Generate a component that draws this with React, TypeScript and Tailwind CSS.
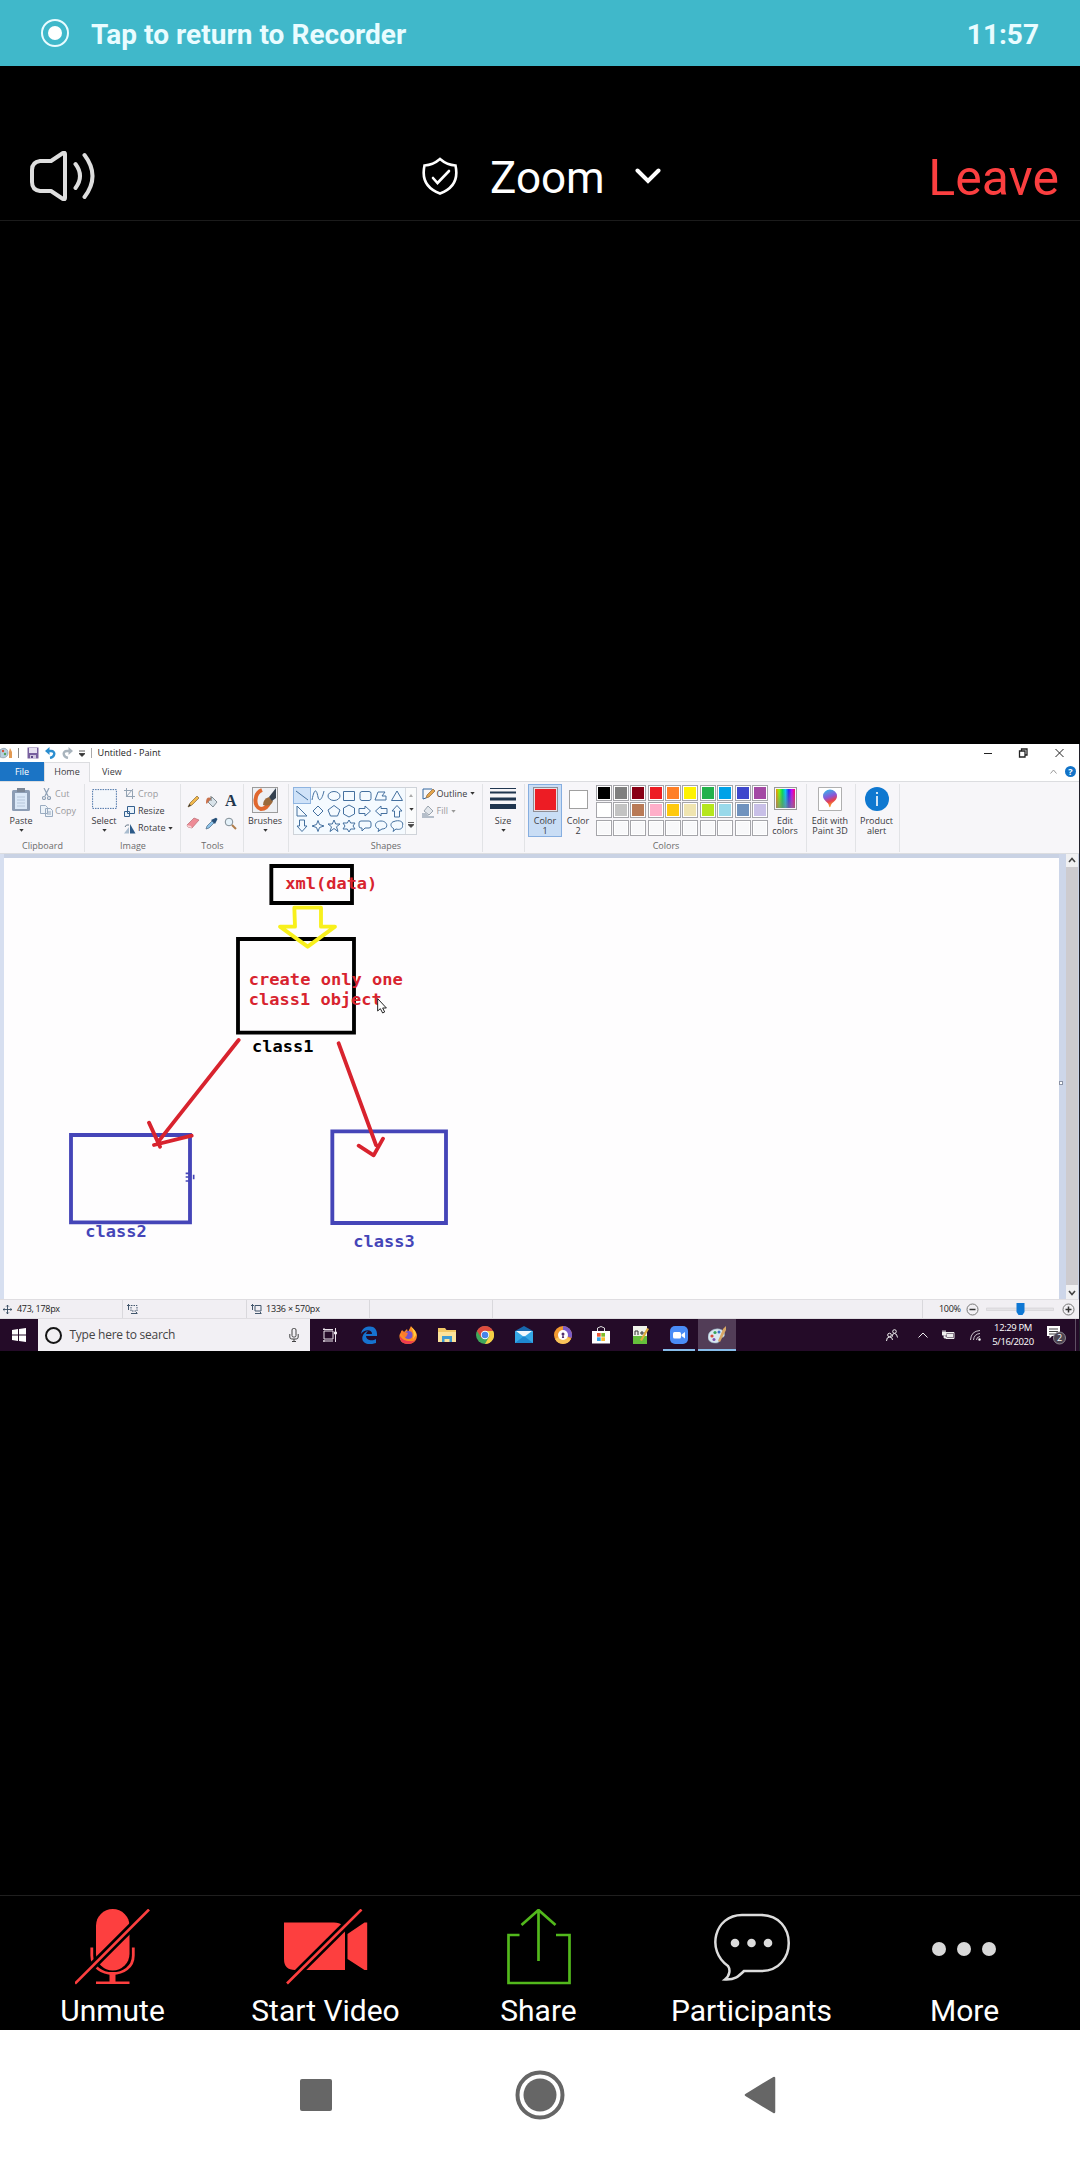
import React from "react";

type Kids = { children?: React.ReactNode };

const Caret = ({ c = "#333" }: { c?: string }) => (
  <svg width="5" height="3" viewBox="0 0 5 3" className="shrink-0"><path d="M.3 0h4.4L2.5 2.8z" fill={c} /></svg>
);

function Group({ w, label, children }: Kids & { w: string; label?: string }) {
  return (
    <div className={`${w} relative flex h-full shrink-0 flex-col`}>
      <div className="flex h-[58px] w-full">{children}</div>
      <div className="h-[12px] text-center leading-[12px] text-[#6b6b6b]">{label}</div>
      <div className="absolute right-0 top-[2px] h-[68px] w-px bg-[#e2e3e6]" />
    </div>
  );
}

function BigButton({ w, icon, lines, caret }: { w: string; icon: React.ReactNode; lines: string[]; caret?: boolean }) {
  return (
    <div className={`${w} flex shrink-0 flex-col items-center pt-[5px]`}>
      <div className="flex h-[27px] items-start justify-center">{icon}</div>
      {lines.map((l) => (
        <div key={l} className="h-[10.3px] whitespace-nowrap leading-[13px]">{l}</div>
      ))}
      {caret && <div className="flex h-[10px] items-center pt-[2px]"><Caret /></div>}
    </div>
  );
}

function Row({ icon, text, dim, caret }: { icon: React.ReactNode; text: string; dim?: boolean; caret?: boolean }) {
  return (
    <div className={`flex h-[17.4px] items-center ${dim ? "text-[#9a9a9e]" : ""}`}>
      <div className="mr-[2px] flex w-[13px] justify-center">{icon}</div>
      <span className="whitespace-nowrap">{text}</span>
      {caret && <span className="ml-[3px]"><Caret c={dim ? "#999" : "#333"} /></span>}
    </div>
  );
}

function TitleBar() {
  return (
    <div className="flex h-[18px] items-center bg-white">
      <svg width="13" height="12" viewBox="0 0 13 12" className="shrink-0">
        <path d="M0 3C3 0 8 1 8 6c0 4-4 6-8 4z" fill="#b7cfdf" stroke="#7b8a96" strokeWidth=".6" />
        <circle cx="3" cy="4" r="1.2" fill="#d8533d" /><circle cx="5" cy="7" r="1.2" fill="#4fa35a" />
        <path d="M9 11V5l1-4 2 4v6z" fill="#e29a52" />
      </svg>
      <div className="ml-[5px] h-[10px] w-px bg-[#888]" />
      <svg className="ml-[7.500px]" width="12" height="12" viewBox="0 0 12 12">
        <path d="M.5.5h11v11H.5z" fill="#78609f" /><path d="M2 1h8v5H2z" fill="#e6e0f0" /><path d="M3 8h6v4H3z" fill="#cfc5df" /><path d="M4 9h2v2H4z" fill="#5c4787" />
      </svg>
      <svg className="ml-[6px]" width="11" height="12" viewBox="0 0 11 12">
        <path d="M2 4h4c5 0 4 6-1 7" fill="none" stroke="#2b8ed0" strokeWidth="2.4" /><path d="M0 4l4.500-4v8z" fill="#2b8ed0" />
      </svg>
      <svg className="ml-[6px]" width="11" height="12" viewBox="0 0 11 12">
        <path d="M9 4H5C0 4 1 10 6 11" fill="none" stroke="#a9b4bd" strokeWidth="2.4" /><path d="M11 4L6.500 0v8z" fill="#a9b4bd" />
      </svg>
      <svg className="ml-[6px]" width="6" height="8" viewBox="0 0 6 8"><path d="M0 2h6M0 4.500h6L3 7.500z" stroke="#333" strokeWidth=".8" fill="#333" /></svg>
      <div className="ml-[6px] h-[10px] w-px bg-[#aaa]" />
      <span className="ml-[6px] whitespace-nowrap text-[9.1px] text-[#222]">Untitled - Paint</span>
      <div className="grow" />
      <svg width="80" height="12" viewBox="0 0 80 12" className="mr-[15.500px]" fill="none" stroke="#222" strokeWidth="1">
        <path d="M0 6.500h8" /><path d="M35.500 4h5.500v6h-5.500zM37.500 4V2h5.500v6h-2" strokeWidth="1.300" /><path d="M71.500 2l8 8m0-8l-8 8" />
      </svg>
    </div>
  );
}

function Tabs() {
  return (
    <div className="flex h-[19px] items-center bg-white">
      <div className="flex h-full w-[44px] items-center justify-center bg-[#1b74c5] text-white">File</div>
      <div className="relative z-10 mb-[-1px] flex h-[20px] w-[46px] items-center justify-center border-x border-t border-[#dcdde0] bg-[#f7f6f9] pb-px">Home</div>
      <div className="ml-[12px]">View</div>
      <div className="grow" />
      <svg width="7" height="5" viewBox="0 0 7 5"><path d="M.5 4.500l3-3.500 3 3.500" fill="none" stroke="#999" /></svg>
      <div className="ml-[8.500px] mr-[3px] flex size-[11px] items-center justify-center rounded-full bg-[#1273c8] text-[9px] font-bold text-white">?</div>
    </div>
  );
}

const SHAPES = [
  "M1 2l12 9", "M1 11C4 -4 6 3 7 8s4 3 6-6", "M1 7a6 4.500 0 1012 0a6 4.500 0 10-12 0z", "M1.500 2.500h11v9h-11z",
  "M4 2.500h7q2 0 2 2v5q0 2-2 2H4q-2 0-2-2v-5q0-2 2-2z", "M1 11l3-8h7l-3 4h4v4z", "M7 2l5.500 9.500h-11z",
  "M2 2v10h10z", "M7 2l5 5-5 5-5-5z", "M7 1.500l6 4.500-2.500 6h-7L1 6z", "M7 1l5.500 3v6L7 13l-5.500-3V4z",
  "M1 4.500h6V2l5.500 5L7 12V9.500H1z", "M13 4.500H7V2L1.500 7 7 12V9.500h6z", "M4.500 13V7H2l5-5.500L12 7H9.500v6z",
  "M4.500 1v6H2l5 5.500L12 7H9.500V1z", "M7 1.500l1.500 4 4.500 1.500-4.500 1.500-1.500 4-1.500-4L1 7l4.500-1.500z",
  "M7 1l1.700 4H13l-3.500 2.800L11 12.500 7 9.500l-4 3 1.500-4.700L1 5h4.300z",
  "M7 1l1.700 3H13l-2 3 2 3H8.700L7 13l-1.700-3H1l2-3-2-3h4.300z",
  "M3 2h8q2 0 2 2v3q0 2-2 2H7l-3 3V9H3Q1 9 1 7V4q0-2 2-2z", "M5 10C0 9 0 2 7 2s8 8 1 8l-4 2.500z", "M4 10C-1 7 1 3 4 2.500c5-2 10 0 8.500 4C13 10 9 11 6 10l-3 2.500z",
];

const PALETTE = [
  ["#000000", "#7f7f7f", "#880015", "#ed1c24", "#ff7f27", "#fff200", "#22b14c", "#00a2e8", "#3f48cc", "#a349a4"],
  ["#ffffff", "#c3c3c3", "#b97a57", "#ffaec9", "#ffc90e", "#efe4b0", "#b5e61d", "#99d9ea", "#7092be", "#c8bfe7"],
  ["#f8f8fa", "#f8f8fa", "#f8f8fa", "#f8f8fa", "#f8f8fa", "#f8f8fa", "#f8f8fa", "#f8f8fa", "#f8f8fa", "#f8f8fa"],
];

const TOOLS = [
  <svg key="p" width="13" height="13" viewBox="0 0 13 13"><path d="M1 12l2-4 7-7 2 2-7 7z" fill="#f1b84c" stroke="#8a6a3a" strokeWidth=".7" /><path d="M1 12l1.500-3 1.500 1.500z" fill="#333" /></svg>,
  <svg key="b" width="14" height="13" viewBox="0 0 14 13"><path d="M7 2l5 5-4 5-5-5z" fill="#d9e3ea" stroke="#66757f" strokeWidth=".8" /><path d="M6 3Q1 1 1 8q1 2 2-1l3-3z" fill="#c9704a" /><path d="M6 1v5" stroke="#777" /></svg>,
  <span key="a" className="font-['Liberation_Serif'] text-[16px] font-bold leading-none text-[#23364d]">A</span>,
  <svg key="e" width="14" height="12" viewBox="0 0 14 12"><path d="M1 8l7-7 5 2-7 8-4-1z" fill="#ee8b96" stroke="#b86b73" strokeWidth=".7" /><path d="M1 8l4 1 1 2-4-1z" fill="#f9d4d6" /></svg>,
  <svg key="d" width="13" height="13" viewBox="0 0 13 13"><path d="M1 12l1-3 5-5 2 2-5 5z" fill="#8ec3ea" stroke="#4b6983" strokeWidth=".7" /><path d="M6 3l4 4 2.500-5L11 .7z" fill="#264f78" /></svg>,
  <svg key="z" width="13" height="13" viewBox="0 0 13 13"><circle cx="5" cy="5" r="3.800" fill="#e5f2fa" stroke="#7f8b94" /><path d="M8 8l4 4" stroke="#b07d4a" strokeWidth="2" /></svg>,
];

function Ribbon() {
  return (
    <div className="flex h-[73px] border-b border-t border-[#dcdde0] bg-[#f7f6f9]">
      <Group w="w-[85px]" label="Clipboard">
        <BigButton w="w-[42px]" lines={["Paste"]} caret icon={
          <svg width="20" height="25" viewBox="0 0 20 25"><rect x="1" y="3" width="18" height="21" rx="1.500" fill="#8d9db5" /><path d="M4 6h12v16H4z" fill="#dbe8f8" /><path d="M6 1h8v4H6z" fill="#7c8797" /><path d="M6 10h8M6 13h8M6 16h8M6 19h8" stroke="#b6c6db" /></svg>} />
        <div className="-ml-[2px] pt-[3px]">
          <Row dim text="Cut" icon={<svg width="9" height="12" viewBox="0 0 9 12" fill="none" stroke="#8fa0b5" strokeWidth="1.200"><path d="M2 0l4 8M7 0L3 8" /><circle cx="2" cy="10" r="1.500" /><circle cx="7" cy="10" r="1.500" /></svg>} />
          <Row dim text="Copy" icon={<svg width="13" height="12" viewBox="0 0 13 12" fill="#eef3f9" stroke="#9aabc0"><path d="M.5.5h5l2 2v6h-7zM5.500 3.500h5l2 2v6h-7z" /><path d="M7 7h4M7 9h4" /></svg>} />
        </div>
      </Group>
      <Group w="w-[96px]" label="Image">
        <BigButton w="w-[38px]" lines={["Select"]} caret icon={
          <svg width="25" height="22" viewBox="0 0 25 22"><rect x=".6" y="2.600" width="23.800" height="18.800" fill="#f4f7fb" stroke="#4a74a8" strokeDasharray="1.500 1" /></svg>} />
        <div className="pt-[3px]">
          <Row dim text="Crop" icon={<svg width="11" height="11" viewBox="0 0 11 11" fill="none" stroke="#94a3b3"><path d="M2.500 0v8.500H11M0 2.500h8.500V11M2 9l7-8" /></svg>} />
          <Row text="Resize" icon={<svg width="11" height="11" viewBox="0 0 11 11" fill="#eaf2fa" stroke="#35608f"><path d="M3.500.5h7v7h-7zM.5 5.500h5v5h-5z" /></svg>} />
          <Row text="Rotate" caret icon={<svg width="12" height="11" viewBox="0 0 12 11"><path d="M0 10.500h5V4z" fill="#a9bccf" /><path d="M6 1v9.500h5.500z" fill="#2c5a88" /><path d="M1 4q1-3 4-2" stroke="#678" fill="none" /></svg>} />
        </div>
      </Group>
      <Group w="w-[63px]" label="Tools">
        <div className="ml-[3px] mt-[8px] grid h-[44px] w-[56px] grid-cols-3 grid-rows-2 place-items-center">{TOOLS}</div>
      </Group>
      <Group w="w-[45px]">
        <BigButton w="w-[42px]" lines={["Brushes"]} caret icon={
          <svg width="26" height="26" viewBox="0 0 26 26"><rect x=".5" y=".5" width="25" height="25" fill="#eef0f4" stroke="#9c9c9c" /><path d="M10 3C2 6 1 20 9 22q6 0 9-8" stroke="#e0672e" strokeWidth="4" fill="none" /><path d="M11 18q0-6 6-8l4 4q-2 6-10 4z" fill="#9a6a3c" /><path d="M17 10l7-9v10l-4 3z" fill="#34404f" /></svg>} />
      </Group>
      <Group w="w-[194px]" label="Shapes">
        <div className="ml-[4px] mt-[5px] flex h-[48px] w-[124px] shrink-0 border border-[#cfd3d9] bg-[#f4faff]">
          <div className="grid w-[111px] grid-cols-7 grid-rows-3">
            {SHAPES.map((d, i) => (
              <div key={i} className={`flex items-center justify-center ${i === 0 ? "bg-[#cfe2f8] outline outline-1 outline-[#8fb4e0]" : ""}`}>
                <svg width="14" height="14" viewBox="0 0 14 14"><path d={d} fill="none" stroke="#44709f" strokeWidth="1" /></svg>
              </div>
            ))}
          </div>
          <div className="flex grow flex-col items-center justify-around border-l border-[#d8dce2] bg-[#fafbfc]">
            <svg width="4" height="3"><path d="M0 3h4L2 0z" fill="#aaa" /></svg><Caret /><svg width="6" height="6"><path d="M0 .5h6M0 2.500h6L3 5.500z" stroke="#444" strokeWidth=".8" fill="#444" /></svg>
          </div>
        </div>
        <div className="ml-[4.500px] pt-[3px]">
          <Row text="Outline" caret icon={<svg width="13" height="12" viewBox="0 0 13 12"><path d="M10 1H1v10l3-1" fill="none" stroke="#3568a0" /><path d="M4 10l1-3 6-6 2 2-6 6z" fill="#e5a54b" stroke="#85623a" strokeWidth=".7" /></svg>} />
          <Row dim text="Fill" caret icon={<svg width="13" height="13" viewBox="0 0 13 13"><path d="M6 1l5 5-4 4-5-4z" fill="#e3e7ec" stroke="#99a3ae" /><path d="M0 8h4l3 3h5v2H0z" fill="#b4bdc9" /></svg>} />
        </div>
      </Group>
      <Group w="w-[42px]">
        <BigButton w="w-[40px]" lines={["Size"]} caret icon={
          <svg width="26" height="24" viewBox="0 0 26 24" fill="#203650"><path d="M0 1h26v1H0zM0 4.500h26v2H0zM0 10.500h26v3H0zM0 17h26v5H0z" /></svg>} />
      </Group>
      <Group w="w-[282px]" label="Colors">
        <div className="ml-[3px] mt-[2px] h-[53px] w-[34px] shrink-0 border border-[#86aee0] bg-[#c9ddf5]">
          <div className="-mt-[3px]">
            <BigButton w="w-[32px]" lines={["Color", "1"]} icon={<div className="size-[25px] border border-[#8e8e96] bg-[#ed1c24] outline outline-1 -outline-offset-2 outline-[#e8dfe4]" />} />
          </div>
        </div>
        <BigButton w="w-[32px]" lines={["Color", "2"]} icon={<div className="mt-[3px] size-[19px] border border-[#a0a0a0] bg-white" />} />
        <div className="ml-[1.500px] mt-[3px] flex shrink-0 flex-col gap-[1.400px]">
          {PALETTE.map((r, i) => (
            <div key={i} className="flex gap-[1.400px]">
              {r.map((c, j) => (
                <div key={j} className="size-[16px] border border-[#a5a5aa] bg-white p-px"><div className="size-full" style={{ background: c }} /></div>
              ))}
            </div>
          ))}
        </div>
        <BigButton w="w-[34px]" lines={["Edit", "colors"]} icon={
          <div className="size-[23px] border border-[#999] p-px">
            <div className="size-full bg-[linear-gradient(to_bottom,transparent,rgba(128,128,128,.7)),linear-gradient(to_right,#f80,#8f0,#0d5,#0cf,#22f,#c0f,#f06)]" />
          </div>} />
      </Group>
      <Group w="w-[49px]">
        <BigButton w="w-[46px]" lines={["Edit with", "Paint 3D"]} icon={
          <svg width="24" height="24" viewBox="0 0 24 24"><defs><linearGradient id="pin" x2=".3" y2="1"><stop stopColor="#27c5ee" /><stop offset=".5" stopColor="#8b56d8" /><stop offset=".75" stopColor="#e8404f" /><stop offset="1" stopColor="#f5a02c" /></linearGradient></defs><path d="M.5.500h23v23H.5z" fill="#fff" stroke="#b0b0b0" /><path d="M5 9a7 6.500 0 0114 0c0 5-5 6-6 9q-1 4-2 1c0-4-6-5-6-10z" fill="url(#pin)" /></svg>} />
      </Group>
      <Group w="w-[44px]">
        <BigButton w="w-[41px]" lines={["Product", "alert"]} icon={
          <svg width="24" height="24" viewBox="0 0 24 24"><circle cx="12" cy="12" r="12" fill="#0f78d0" /><path d="M12 9v10" stroke="#fff" strokeWidth="1.600" /><circle cx="12" cy="6" r="1.100" fill="#fff" /></svg>} />
      </Group>
    </div>
  );
}

function Drawing() {
  const red = "#d8232e", blue = "#4545b8";
  return (
    <svg width="1055" height="441" viewBox="0 0 1055 441" className="block shrink-0 bg-[#fefdfe]">
      <g transform="translate(46 -8)">
        <g transform="scale(.33333)" fill="none" strokeWidth="11.500">
          <path d="M664 48h242v111H664zM564 267h348v281H564z" stroke="#000" />
          <g stroke={blue}><path d="M63 855h357v262H63zM847 844h341v275H847z" /><path d="M407 970h12M407 981h14M407 993h12M431 974v14" strokeWidth="5" /></g>
        </g>
        <g fontFamily="'DejaVu Sans Mono', monospace" fontWeight="700" fontSize="16.500" fill={red}>
          <text x="235.300" y="39.300" textLength="92" lengthAdjust="spacingAndGlyphs">xml(data)</text>
          <text x="198.800" y="134.500" textLength="154" lengthAdjust="spacingAndGlyphs">create only one</text>
          <text x="198.800" y="155" textLength="133" lengthAdjust="spacingAndGlyphs">class1 object</text>
          <text x="202" y="201.700" fill="#000" textLength="61.500" lengthAdjust="spacingAndGlyphs">class1</text>
          <text x="35.300" y="386.700" fill={blue} textLength="61.500" lengthAdjust="spacingAndGlyphs">class2</text>
          <text x="303.300" y="396.700" fill={blue} textLength="61.500" lengthAdjust="spacingAndGlyphs">class3</text>
        </g>
        <g transform="scale(.33333)" fill="none" strokeWidth="11.500" strokeLinecap="round" strokeLinejoin="round">
          <path d="M733 173h80v57h42l-82 60-83-60h45z" stroke="#f8f01c" />
          <path d="M566 570L325 875M297 818l33 72M312 885l113-28M866 580l112 305M926 887l45 29 28-50" stroke={red} />
          <path d="M983 447v36l8-7 7 13 6-3-6-12h10z" fill="#fff" stroke="#222" strokeWidth="3" strokeLinejoin="miter" />
        </g>
      </g>
    </svg>
  );
}

function Workspace() {
  return (
    <div className="flex h-[445px] bg-[#c9d2e4]">
      <div className="h-full w-[4px] bg-[#d7dff0]" />
      <div className="pt-[4px]"><Drawing /></div>
      <div className="flex h-full w-[7px] items-center bg-[#cdd6e9] pt-[13px]"><div className="size-[4px] border border-[#8b93a5] bg-white" /></div>
      <div className="flex h-full w-[12px] flex-col items-center bg-[#f0f0f2]">
        <svg width="12" height="13" viewBox="0 0 12 13"><path d="M3 8l3-3.500L9 8" fill="none" stroke="#444" strokeWidth="1.600" /></svg>
        <div className="w-full grow bg-[#cdcbcf]" />
        <svg width="12" height="14" viewBox="0 0 12 14"><path d="M3 6l3 3.500L9 6" fill="none" stroke="#444" strokeWidth="1.600" /></svg>
      </div>
    </div>
  );
}

const SizeIcon = ({ dashed }: { dashed?: boolean }) => (
  <svg width="11" height="10" viewBox="0 0 11 10" fill="none" stroke="#42566c"><path d="M1.500 0v6M0 2l1.500-1.500L3 2M4 9.500h6M9 8l1.500 1.500" /><path d="M4 1.500h6v5.500H4z" strokeDasharray={dashed ? "1.500 1" : undefined} /></svg>
);

function StatusBar() {
  return (
    <div className="flex h-[20px] shrink-0 items-center border-y border-[#dfdde1] bg-[#f1eff3] text-[9px] text-[#222]">
      <div className="flex h-full w-[123px] items-center border-r border-[#d9d8dc] pl-[3px]">
        <svg width="9" height="9" viewBox="0 0 9 9" fill="none" stroke="#34495f"><path d="M4.500 0v9M0 4.500h9M3.200 1.500l1.300-1.300 1.300 1.300M3.200 7.500l1.300 1.300 1.300-1.300M1.500 3.200L.2 4.500l1.300 1.300M7.500 3.200l1.300 1.300-1.300 1.300" strokeWidth=".9" /></svg>
        <span className="ml-[5px] tracking-[-0.3px]">473, 178px</span>
      </div>
      <div className="flex h-full w-[124px] items-center border-r border-[#d9d8dc] pl-[4px]"><SizeIcon dashed /></div>
      <div className="flex h-full w-[123px] items-center border-r border-[#d9d8dc] pl-[4px]"><SizeIcon /><span className="ml-[4px] whitespace-nowrap tracking-[-0.200px]">1336 × 570px</span></div>
      <div className="h-full w-[123px] border-r border-[#d9d8dc]" />
      <div className="h-full w-[430px] border-r border-[#d9d8dc]" />
      <span className="ml-[16px] w-[26px] tracking-[-0.3px]">100%</span>
      <svg width="110" height="16" viewBox="0 0 110 16" fill="none">
        <circle cx="7.500" cy="8.500" r="5.500" stroke="#777" /><path d="M4.500 8.500h6" stroke="#333" strokeWidth="1.500" />
        <path d="M21.500 7h67v2.500h-67z" fill="#e4e3e6" stroke="#d0cfd3" strokeWidth=".6" />
        <path d="M51.500 2h8v9l-2 3h-4l-2-3z" fill="#0f78d4" />
        <circle cx="103.500" cy="8.500" r="5.500" stroke="#777" /><path d="M100.500 8.500h6M103.500 5.500v6" stroke="#333" strokeWidth="1.500" />
      </svg>
    </div>
  );
}

const APPS: { el: React.ReactNode; cls?: string }[] = [
  { el: <g fill="none" stroke="#e9e3ea" strokeWidth="1"><path d="M4 5h9v8H4zM4 2v2M4 14v2M3 3.500h10M3 15h10M15.500 2v14" /><path d="M14.500 6h2v2h-2z" fill="#fff" /></g>, cls: "w-[37px] mr-[3px]" },
  { el: <path d="M1 8C2 2 6 .5 10 .5c5 0 7.500 4 7 9.500H6c.5 5 7 5 10 3v4C8 20 1 17 2.500 10.500 3.500 7 6 5.500 8 5c-1 1-1.700 2-2 3h6c0-6-9-4-11 0z" fill="#1673cf" /> },
  { el: <><path d="M9 18C3 18 0 14 .5 9L3 4l2 2 3-3 1 3 3-6c1 2 5 4 6 9 0 6-4 9-9 9z" fill="#fd8b24" /><path d="M1 10q-1 7 8 8 5 0 8-5-2 3-6 2c-5 0-8-2-10-5z" fill="#ee3b50" /><path d="M12 1q5 3 5 8l-3 4q2-6-2-12z" fill="#ffcf3e" /><circle cx="9.500" cy="9" r="4" fill="#7653c9" /><path d="M2 5l7 2-2 4q-4 0-5-6z" fill="#fd7a2b" /></> },
  { el: <><path d="M0 2h7l1.500 2H18v12H0z" fill="#f2c866" /><path d="M0 6h18v10H0z" fill="#fbe39a" /><path d="M4 16v-6h10v6h-2.500v-3h-5v3z" fill="#3d9bd2" /></> },
  { el: <><circle cx="9" cy="9" r="9" fill="#3fa75a" /><path d="M1 5A9 9 0 0117 5H9z" fill="#dd4b3e" /><path d="M1 5l4.500 7L9 9V4z" fill="#dd4b3e" /><path d="M17.200 5A9 9 0 019 18l4.500-8L9 5z" fill="#f7ce45" /><circle cx="9" cy="9" r="4.200" fill="#fff" /><circle cx="9" cy="9" r="3.300" fill="#4884e8" /></> },
  { el: <><path d="M0 5l9-5 9 5z" fill="#1867ac" /><path d="M0 5h18v12H0z" fill="#35a8e6" /><path d="M1 5h16l-8 6z" fill="#f2f8fc" /><path d="M0 17l9-7 9 7z" fill="#1e88d0" /></> },
  { el: <><circle cx="9" cy="9" r="9" fill="#f39a2f" /><path d="M9 0a9 9 0 018.500 12L9 9z" fill="#7c5cc8" /><path d="M1 13a9 9 0 0016 0L9 9z" fill="#f7c35a" /><circle cx="9" cy="9" r="5" fill="#fff" /><circle cx="9" cy="8" r="1.500" fill="#52306e" /><path d="M9 8l1.200 4h-2.400z" fill="#52306e" /></> },
  { el: <><path d="M0 5h18v12.500H0z" fill="#fff" /><path d="M5.500 5V2q3.500-3 7 0v3" fill="none" stroke="#ddd" /><path d="M5 7h3.700v3.700H5z" fill="#ea5634" /><path d="M9.300 7H13v3.700H9.300z" fill="#7fbb2c" /><path d="M5 11.300h3.700V15H5z" fill="#2fa4e7" /><path d="M9.300 11.300H13V15H9.300z" fill="#fbba2e" /></> },
  { el: <><path d="M2 0h14v18H2z" fill="#f0f3ea" /><path d="M2 10h14v8H2z" fill="#65bf3b" /><path d="M4 9V5h3v4M9 7h5M11 5v4" stroke="#333" fill="none" /><path d="M9 14l7-12 2 1-7 12z" fill="#e0ad3c" /></> },
  { el: <><rect width="18" height="18" rx="5" fill="#4a8cf7" /><rect x="3" y="6" width="8" height="6.500" rx="1.500" fill="#fff" /><path d="M11.500 8.500L15 6v6.500l-3.500-2.500z" fill="#fff" /></>, cls: "border-b-2 border-[#86bce9] mx-[3.500px] w-[31.700px]" },
  { el: <><path d="M0 11C0 3 12 0 16 6c2 6-2 5-4 6s1 5-4 5c-5 0-8-2-8-6z" fill="#d9e8f1" stroke="#8ba6b8" strokeWidth=".6" /><circle cx="4" cy="10" r="1.600" fill="#d64a3a" /><circle cx="7" cy="6.500" r="1.600" fill="#3aa35a" /><circle cx="11" cy="6" r="1.500" fill="#3a71c9" /><circle cx="6" cy="13.500" r="1.500" fill="#7a4fb0" /><path d="M10 15l5-12 3-3v4l-6 12z" fill="#d9a765" /></>, cls: "border-b-2 border-[#86bce9] bg-[#523d57] w-[38px]" },
];

function Taskbar() {
  return (
    <div className="flex h-[32px] shrink-0 bg-[#240b28] text-white">
      <div className="flex w-[38px] items-center justify-center">
        <svg width="14" height="14" viewBox="0 0 14 14" fill="#fff"><path d="M0 2l6-1v5.500H0zM7 .900L14 0v6.500H7zM0 7.500h6V13l-6-1zM7 7.500h7V14l-7-1z" /></svg>
      </div>
      <div className="flex w-[272px] items-center bg-[#f2f0f4] pl-[7px] text-[#444]">
        <div className="size-[17px] rounded-full border-[2.500px] border-[#151515]" />
        <span className="ml-[7.500px] grow whitespace-nowrap text-[12px] tracking-[-0.250px]">Type here to search</span>
        <svg width="10" height="14" viewBox="0 0 10 14" className="mr-[11.500px]" fill="none" stroke="#444"><rect x="3" y=".5" width="4" height="8.500" rx="1.500" /><path d="M.8 6v3q0 2 2 2h4.400q2 0 2-2V6M5 11v3M3 13.500h4" /></svg>
      </div>
      {APPS.map((a, i) => (
        <div key={i} className={`flex h-full shrink-0 items-center justify-center ${a.cls ?? "w-[38.700px]"} ${i > 8 ? "pt-[2px]" : ""}`}>
          <svg width="18" height="18" viewBox="0 0 18 18">{a.el}</svg>
        </div>
      ))}
      <div className="grow" />
      <div className="flex items-center">
        <svg width="12" height="12" viewBox="0 0 12 12" fill="none" stroke="#eee"><circle cx="3.500" cy="6" r="1.800" /><path d="M.5 12q0-4 3-4t3 3" /><circle cx="8.500" cy="2.500" r="1.800" /><path d="M6 8q0-3.500 2.500-3.500t3 4" /></svg>
        <svg className="ml-[20px]" width="10" height="6" viewBox="0 0 10 6"><path d="M.5 5.500L5 1l4.500 4.500" stroke="#eee" fill="none" /></svg>
        <svg className="ml-[14px]" width="13" height="10" viewBox="0 0 13 10"><path d="M4 2.500h8v6H4z" stroke="#eee" fill="none" /><path d="M5 3.500h6v4H5z" fill="#eee" /><path d="M0 2h4v3H0zM2 5v3h3M1 0v2M3 0v2" stroke="#eee" fill="#eee" strokeWidth=".8" /></svg>
        <svg className="ml-[15px]" width="11" height="11" viewBox="0 0 11 11" fill="none" stroke="#c9c2cb"><path d="M.5 10Q1 1 10 .5M3.500 10Q4 4 10 3.500M6.500 10q0-3 3.500-3.500" /><circle cx="9.500" cy="9.500" r="1" fill="#fff" /></svg>
      </div>
      <div className="ml-[10px] w-[44px] whitespace-nowrap pt-[2px] text-center text-[9.500px] leading-[14px] tracking-[-0.4px]">
        <div>12:29 PM</div><div>5/16/2020</div>
      </div>
      <div className="ml-[12px] flex items-center">
        <svg width="20" height="20" viewBox="0 0 20 20"><path d="M0 1h13v10H5l-2.500 2.500V11H0z" fill="#fff" /><path d="M2 4h9M2 6.500h9M2 9h6" stroke="#444" /><circle cx="12.500" cy="13" r="6" fill="#4b4450" stroke="#8d8691" /><text x="12.500" y="16.200" textAnchor="middle" fontSize="9" fill="#fff" fontFamily="Open Sans, sans-serif">2</text></svg>
      </div>
      <div className="ml-[8px] mr-[3px] h-full w-px bg-[#5f4f63]" />
    </div>
  );
}

function SharedScreen() {
  return (
    <div className="flex h-[607px] w-full shrink-0 flex-col overflow-hidden border-r border-[#20202a] bg-white font-['Open_Sans',sans-serif] text-[9px] leading-[12px] text-[#3a3a3e]">
      <TitleBar /><Tabs /><Ribbon /><Workspace /><StatusBar /><Taskbar />
    </div>
  );
}

const RED = "#fd3f3f";
const ACTIONS: { label: string; icon: React.ReactNode }[] = [
  { label: "Unmute", icon: (
    <svg width="76" height="76" viewBox="75 1909 76 76">
      <rect x="96" y="1909" width="33.500" height="61.500" rx="16.700" fill={RED} />
      <path d="M91.800 1947.500v8c0 24 41.500 24 41.500 0v-8" fill="none" stroke={RED} strokeWidth="2.800" />
      <path d="M109.500 1973.500h6v9h-6z" fill={RED} /><path d="M96 1982.700h33.500" stroke={RED} strokeWidth="2.600" />
      <path d="M75 1983.500L149 1909.500" stroke="#000" strokeWidth="8" /><path d="M75 1983.500L149 1909.500" stroke={RED} strokeWidth="2.600" /></svg>) },
  { label: "Start Video", icon: (
    <svg width="84" height="76" viewBox="284 1909 84 76">
      <path d="M284 1922.500h50q11 0 11 11v36.500h-50q-11 0-11-11zM347.500 1934l17-11.500h2.700v47.500h-2.700l-17-11z" fill={RED} />
      <path d="M287 1983.500L361.500 1909.500" stroke="#000" strokeWidth="8" /><path d="M287 1983.500L361.500 1909.500" stroke={RED} strokeWidth="2.600" /></svg>) },
  { label: "Share", icon: (
    <svg width="64" height="76" viewBox="506.500 1909 64 76" fill="none" stroke="#52b81c" strokeWidth="2.700">
      <path d="M519 1935h-11v48h61v-48H555.500M538 1961v-50M521 1925l17-15 17 15" /></svg>) },
  { label: "Participants", icon: (
    <svg width="76" height="76" viewBox="714 1909 76 76" fill="none" stroke="#dcdcdc" strokeWidth="2.500">
      <path d="M742 1915h19c37 0 37 56 0 56h-17c-5 5-9 9-19 8.500 5-4 5.500-10 3-13.500-22-15-14-51 14-51z" />
      <g fill="#dcdcdc" stroke="none"><circle cx="735" cy="1943" r="4.300" /><circle cx="751.500" cy="1943" r="4.300" /><circle cx="768" cy="1943" r="4.300" /></g></svg>) },
  { label: "More", icon: (
    <svg width="66" height="76" viewBox="931 1909 66 76" fill="#d8d8d8"><circle cx="938" cy="1949" r="7" /><circle cx="963" cy="1949" r="7" /><circle cx="988" cy="1949" r="7" /></svg>) },
];

export default function App() {
  return (
    <div className="flex h-[2160px] w-[1080px] flex-col overflow-hidden bg-black font-['Roboto',sans-serif]">
      <div className="flex h-[66px] shrink-0 items-center bg-[#40b8ca] pl-[41px] pr-[41px] text-[28px] font-bold text-[#e9fcff]">
        <svg width="28" height="28" viewBox="0 0 28 28"><circle cx="14" cy="14" r="13" fill="none" stroke="currentColor" strokeWidth="2" /><circle cx="14" cy="14" r="7" fill="#fff" /></svg>
        <span className="ml-[22px] mt-[3px] grow tracking-[0.030px]">Tap to return to Recorder</span>
        <span className="mt-[3px]">11:57</span>
      </div>

      <div className="flex h-[155px] shrink-0 items-center border-b border-[#1b1b1b] pl-[30px] pr-[21px] pt-[66px] text-white">
        <svg width="66" height="50" viewBox="0 0 66 50" fill="none" stroke="#dedede" strokeWidth="4" strokeLinecap="round" strokeLinejoin="round">
          <path d="M10 10h11L33 2q2-1 2 1v44q0 2-2 1L21 40H10q-8-1-8-9V19q0-8 8-9z" /><path d="M45.500 13q9 12 0 24M54.500 4q16 21 0 42" />
        </svg>
        <svg width="36" height="38" viewBox="0 0 36 38" className="-mt-[1px] ml-[326px]" fill="none" stroke="#fff" strokeWidth="2.600" strokeLinecap="round">
          <path d="M18 2q7 6 15.500 6.500C36 20 33 31 18 36.500 3 31 0 20 2.500 8.500 11 8 18 2 18 2z" /><path d="M11 21l4.500 5L27 14" />
        </svg>
        <span className="mt-[4px] ml-[32px] text-[44px] leading-none">Zoom</span>
        <svg width="26" height="16" viewBox="0 0 26 16" className="ml-[30px]"><path d="M2.500 2.500L13 13 23.500 2.500" fill="none" stroke="#fff" strokeWidth="4" strokeLinecap="round" /></svg>
        <span className="mt-[4px] ml-auto text-[50px] leading-none text-[#fb3f40]">Leave</span>
      </div>

      <div className="h-[523px] shrink-0" />
      <SharedScreen />
      <div className="h-[544px] shrink-0" />

      <div className="flex h-[135px] shrink-0 border-t border-[#1f1f1f] pl-[6px] text-white">
        {ACTIONS.map((a) => (
          <div key={a.label} className="flex w-[213px] shrink-0 flex-col items-center pt-[13px]">
            {a.icon}
            <span className="mt-[8px] whitespace-nowrap text-[30px] leading-[36px]">{a.label}</span>
          </div>
        ))}
      </div>

      <div className="flex h-[130px] shrink-0 items-center bg-white pl-[300px]">
        <div className="size-[32px] rounded-[2px] bg-[#666]" />
        <svg width="50" height="50" viewBox="0 0 50 50" className="ml-[183px]"><circle cx="25" cy="25" r="22.500" fill="none" stroke="#666" strokeWidth="4" /><circle cx="25" cy="25" r="16.500" fill="#666" /></svg>
        <svg width="32" height="38" viewBox="0 0 32 38" className="ml-[179px]"><path d="M30 2v34L2 19z" fill="#666" stroke="#666" strokeWidth="2.500" strokeLinejoin="round" /></svg>
      </div>
    </div>
  );
}
